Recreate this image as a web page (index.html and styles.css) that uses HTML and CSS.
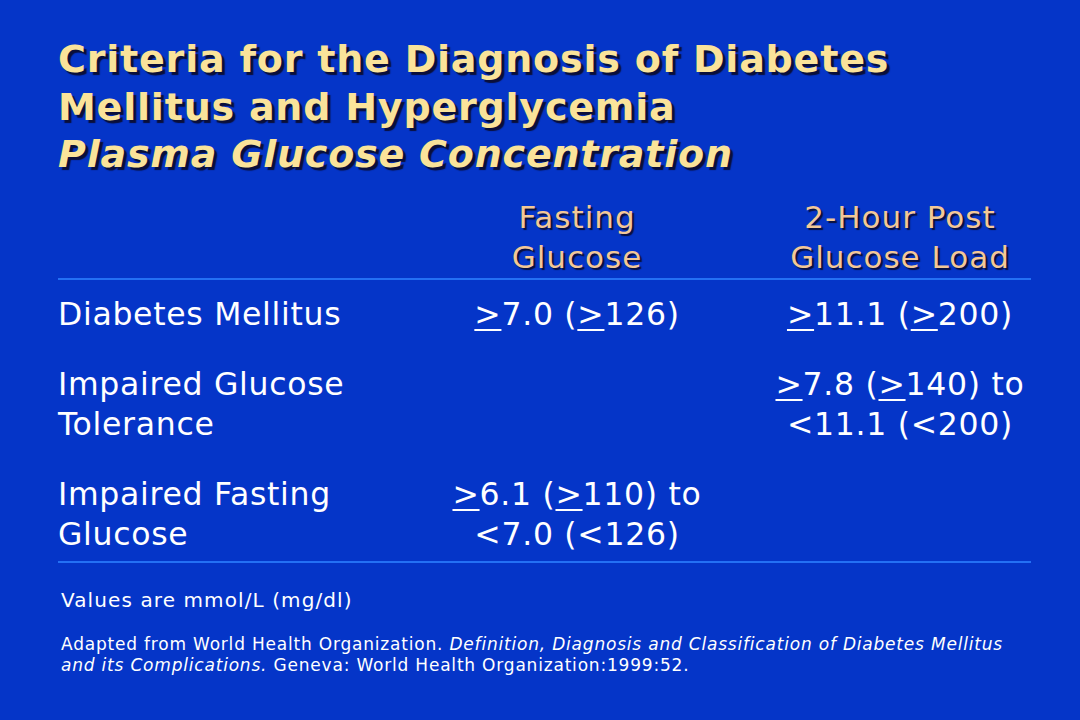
FILE: index.html
```html
<!DOCTYPE html>
<html>
<head>
<meta charset="utf-8">
<link rel="stylesheet" href="styles.css">
</head>
<body>
<div class="slide">
  <h1 class="title">
    <span class="tline">Criteria for the Diagnosis of Diabetes</span>
    <span class="tline">Mellitus and Hyperglycemia</span>
    <span class="tline ital">Plasma Glucose Concentration</span>
  </h1>
  <div class="table">
    <div class="row head">
      <div class="c1"></div>
      <div class="c2">Fasting<br>Glucose</div>
      <div class="c3">2-Hour Post<br>Glucose Load</div>
    </div>
    <div class="body">
      <div class="row">
        <div class="c1">Diabetes Mellitus</div>
        <div class="c2"><u>&gt;</u>7.0 (<u>&gt;</u>126)</div>
        <div class="c3"><u>&gt;</u>11.1 (<u>&gt;</u>200)</div>
      </div>
      <div class="row">
        <div class="c1">Impaired Glucose<br>Tolerance</div>
        <div class="c2"></div>
        <div class="c3"><u>&gt;</u>7.8 (<u>&gt;</u>140) to<br>&lt;11.1 (&lt;200)</div>
      </div>
      <div class="row">
        <div class="c1">Impaired Fasting<br>Glucose</div>
        <div class="c2"><u>&gt;</u>6.1 (<u>&gt;</u>110) to<br>&lt;7.0 (&lt;126)</div>
        <div class="c3"></div>
      </div>
    </div>
  </div>
  <p class="units">Values are mmol/L (mg/dl)</p>
  <div class="cite">
    <span class="cline">Adapted from World Health Organization. <i>Definition, Diagnosis and Classification of Diabetes Mellitus</i></span>
    <span class="cline"><i>and its Complications.</i> Geneva: World Health Organization:1999:52.</span>
  </div>
</div>
</body>
</html>
```

FILE: styles.css
```css
html, body {
  margin: 0;
  padding: 0;
  background: #0535c8;
}
.slide {
  width: 1080px;
  height: 720px;
  box-sizing: border-box;
  padding: 36px 40px 0 58px;
  background: #0535c8;
  font-family: "DejaVu Sans", Verdana, sans-serif;
  color: #ffffff;
  overflow: hidden;
}
.title {
  margin: 0;
  font-size: 38px;
  font-weight: bold;
  letter-spacing: 0.8px;
  line-height: 47.5px;
  color: #fae39a;
  text-shadow: 3px 3px 1px #0a0f3a;
  white-space: nowrap;
}
.tline {
  display: block;
}
.ital {
  font-style: italic;
}
.table {
  margin-top: 18px;
  width: 973px;
}
.row {
  display: grid;
  grid-template-columns: 327px 384px 262px;
  font-size: 31.5px;
  letter-spacing: 0.7px;
  line-height: 40px;
  white-space: nowrap;
}
.row.head {
  font-size: 31px;
  letter-spacing: 1px;
  color: #f3c897;
  text-shadow: 2px 2px 1px #0a0f3a;
  border-bottom: 2px solid #2470f4;
  padding-bottom: 1px;
}
.body {
  border-bottom: 2px solid #2470f4;
  padding: 14px 0 7px;
  display: flex;
  flex-direction: column;
  gap: 30px;
}
.c2, .c3 {
  text-align: center;
}
u {
  text-decoration-thickness: 2px;
  text-underline-offset: 4px;
}
.units {
  margin: 25px 0 0 3px;
  font-size: 20px;
  letter-spacing: 1.1px;
  line-height: 24px;
}
.cite {
  margin: 22px 0 0 3px;
  font-size: 17px;
  letter-spacing: 0.8px;
  line-height: 21px;
  display: flex;
  flex-direction: column;
  white-space: nowrap;
}
.cline {
  display: block;
  height: 21px;
}
```
